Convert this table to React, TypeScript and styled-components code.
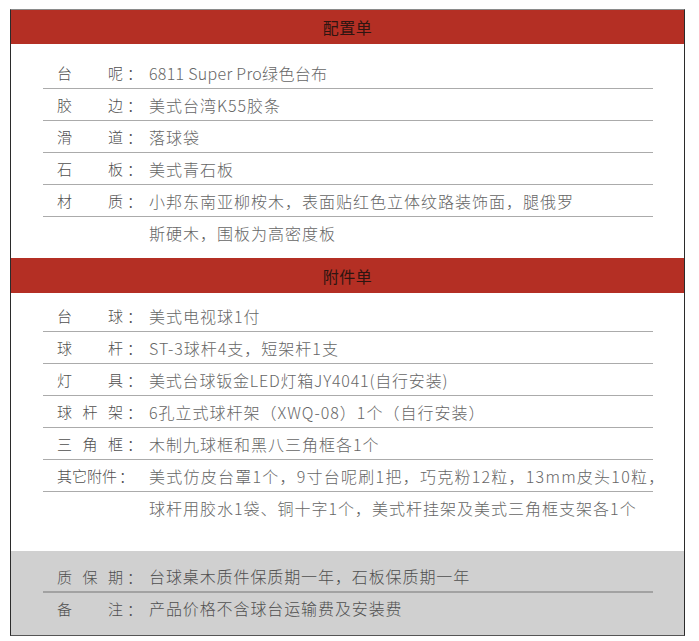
import React from "react";
import styled, { createGlobalStyle } from "styled-components";

const GlobalStyle = createGlobalStyle`
  html, body {
    margin: 0;
    padding: 0;
    background: #fff;
  }
  body {
    font-family: "Noto Sans CJK SC", "Noto Sans", sans-serif;
  }
`;

const Page = styled.div`
  padding: 9px 14px 0 10px;
`;

const Sheet = styled.div`
  width: 675px;
  box-sizing: border-box;
  border: 1px solid #2b2b2b;
  border-top-color: #8a8a8a;
  border-bottom-color: #555;
`;

const Header = styled.div<{ $h: number }>`
  height: ${(p) => p.$h}px;
  background: #b42f24;
  display: flex;
  align-items: center;
  justify-content: center;
  color: #2e1511;
  font-size: 16px;
  font-weight: 400;
  letter-spacing: 0.5px;
`;

const Body = styled.div<{ $top: number; $bottom: number; $grey?: boolean }>`
  padding: ${(p) => p.$top}px 31px ${(p) => p.$bottom}px 32px;
  background: ${(p) => (p.$grey ? "#d0d0d0" : "#fff")};
`;

const Row = styled.div<{ $h: number; $last?: boolean; $grey?: boolean }>`
  height: ${(p) => p.$h}px;
  box-sizing: border-box;
  display: flex;
  align-items: center;
  padding-left: 14px;
  border-bottom: ${(p) =>
    p.$last ? "none" : p.$grey ? "2px solid #a2a2a2" : "1px solid #ababab"};
`;

const Label = styled.div`
  width: 92px;
  flex: none;
  display: flex;
  align-items: center;
  font-size: 15px;
  font-weight: 300;
  color: #4f4f4f;
`;

const Name = styled.div<{ $natural?: boolean }>`
  width: ${(p) => (p.$natural ? 60 : 66)}px;
  display: flex;
  justify-content: ${(p) => (p.$natural ? "flex-start" : "space-between")};
`;

const Colon = styled.span<{ $natural?: boolean }>`
  margin-left: ${(p) => (p.$natural ? 2 : 4)}px;
`;

const Value = styled.div<{ $spacing?: number; $dark?: boolean }>`
  font-size: 16px;
  font-weight: 300;
  letter-spacing: ${(p) => (p.$spacing ?? 1)}px;
  color: ${(p) => (p.$dark ? "#4f4f4f" : "#666")};
  white-space: nowrap;
`;

type Item = {
  label?: string;
  natural?: boolean;
  value: string;
  spacing?: number;
};

type Section = {
  title?: string;
  headerH?: number;
  top: number;
  bottom: number;
  grey?: boolean;
  rowH: number;
  items: Item[];
};

const sections: Section[] = [
  {
    title: "配置单",
    headerH: 34,
    top: 13,
    bottom: 9,
    rowH: 32,
    items: [
      { label: "台呢", value: "6811 Super Pro绿色台布", spacing: 0.3 },
      { label: "胶边", value: "美式台湾K55胶条" },
      { label: "滑道", value: "落球袋" },
      { label: "石板", value: "美式青石板" },
      { label: "材质", value: "小邦东南亚柳桉木，表面贴红色立体纹路装饰面，腿俄罗" },
      { value: "斯硬木，围板为高密度板" },
    ],
  },
  {
    title: "附件单",
    headerH: 35,
    top: 7,
    bottom: 27,
    rowH: 32,
    items: [
      { label: "台球", value: "美式电视球1付" },
      { label: "球杆", value: "ST-3球杆4支，短架杆1支" },
      { label: "灯具", value: "美式台球钣金LED灯箱JY4041(自行安装)", spacing: 0.8 },
      { label: "球杆架", value: "6孔立式球杆架（XWQ-08）1个（自行安装）" },
      { label: "三角框", value: "木制九球框和黑八三角框各1个" },
      {
        label: "其它附件",
        natural: true,
        value: "美式仿皮台罩1个，9寸台呢刷1把，巧克粉12粒，13mm皮头10粒，",
        spacing: 1.25,
      },
      { value: "球杆用胶水1袋、铜十字1个，美式杆挂架及美式三角框支架各1个" },
    ],
  },
  {
    grey: true,
    top: 10,
    bottom: 12,
    rowH: 30,
    items: [
      { label: "质保期", value: "台球桌木质件保质期一年，石板保质期一年", spacing: 0.9 },
      { label: "备注", value: "产品价格不含球台运输费及安装费", spacing: 0.9 },
    ],
  },
];

export default function App() {
  return (
    <Page>
      <GlobalStyle />
      <Sheet>
        {sections.map((s, si) => (
          <React.Fragment key={si}>
            {s.title && <Header $h={s.headerH ?? 34}>{s.title}</Header>}
            <Body $top={s.top} $bottom={s.bottom} $grey={s.grey}>
              {s.items.map((it, i) => (
                <Row
                  key={i}
                  $h={s.rowH + (s.grey && i === 0 ? 2 : 0)}
                  $grey={s.grey}
                  $last={i === s.items.length - 1}
                >
                  <Label>
                    {it.label && (
                      <>
                        <Name $natural={it.natural}>
                          {it.label.split("").map((c, ci) => (
                            <span key={ci}>{c}</span>
                          ))}
                        </Name>
                        <Colon $natural={it.natural}>：</Colon>
                      </>
                    )}
                  </Label>
                  <Value $spacing={it.spacing} $dark={s.grey}>
                    {it.value}
                  </Value>
                </Row>
              ))}
            </Body>
          </React.Fragment>
        ))}
      </Sheet>
    </Page>
  );
}
